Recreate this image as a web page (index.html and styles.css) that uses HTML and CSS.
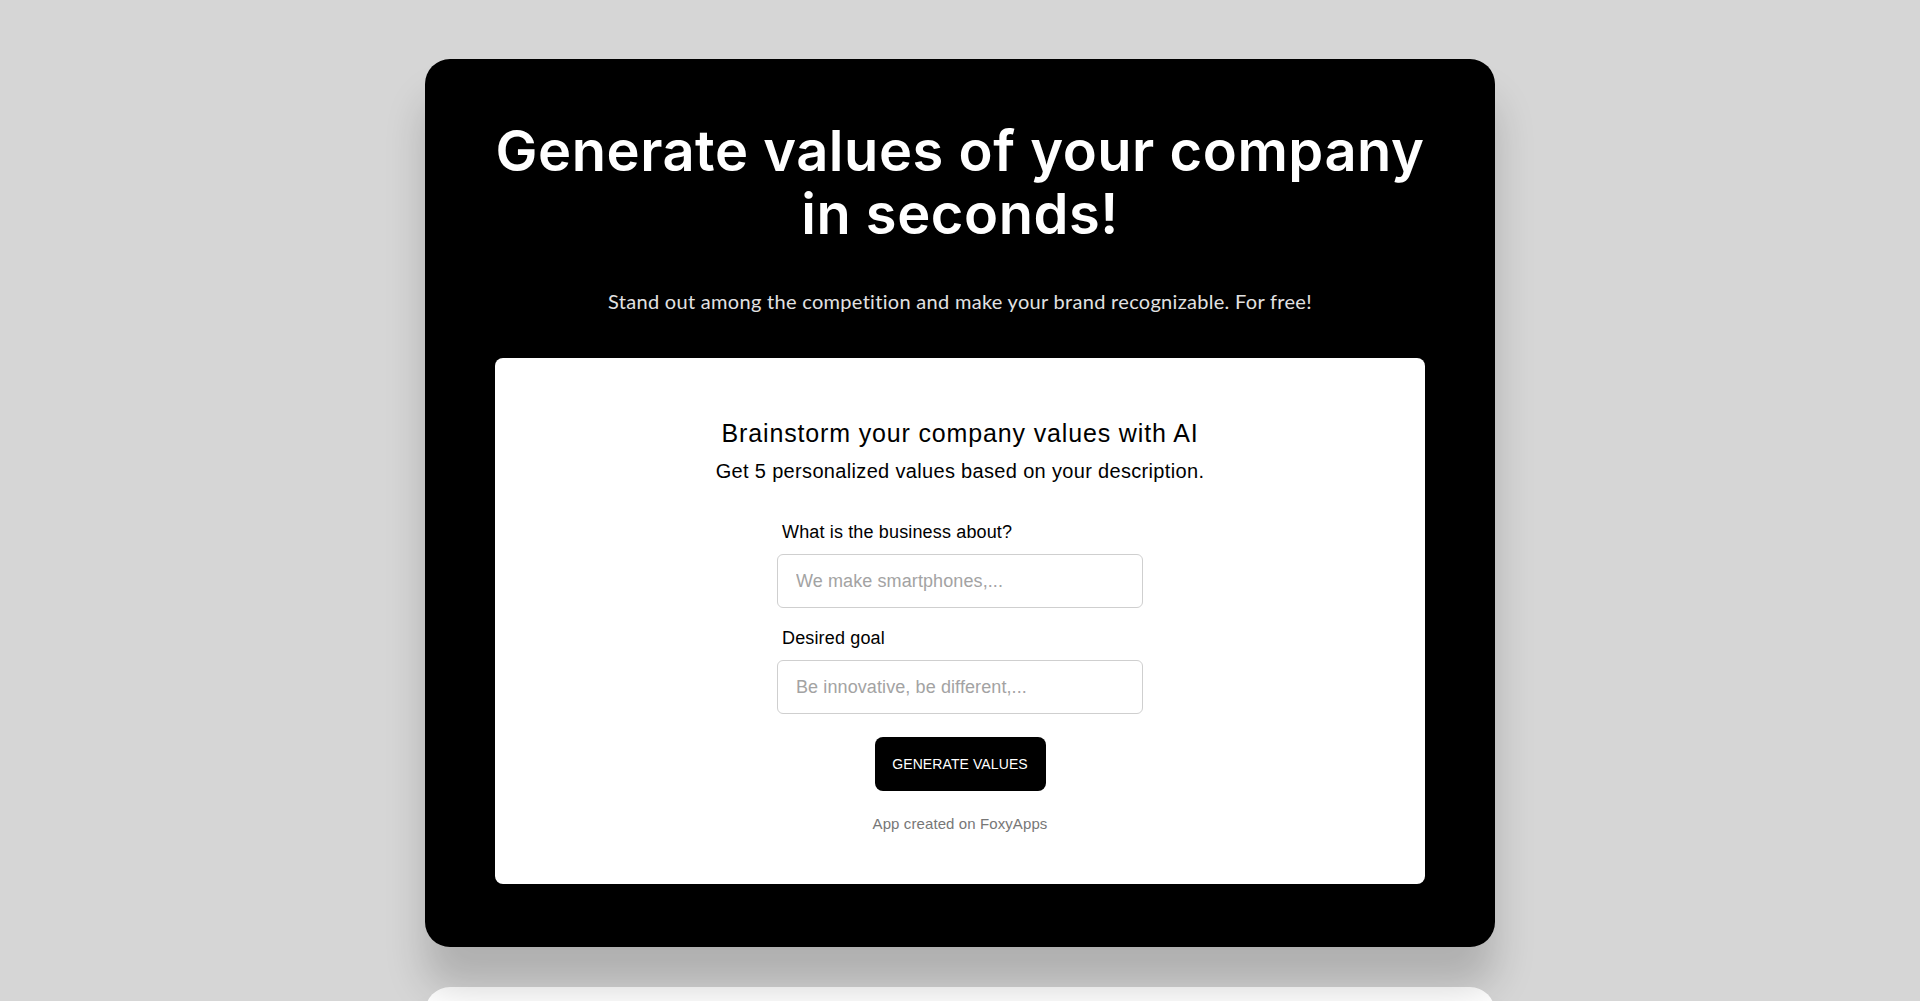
FILE: index.html
```html
<!DOCTYPE html>
<html lang="en">
<head>
<meta charset="utf-8">
<title>Company Values Generator</title>
<link rel="stylesheet" href="styles.css">
</head>
<body>
<main class="page">
  <section class="hero">
    <h1 class="hero-title">Generate values of your company<br>in seconds!</h1>
    <p class="hero-sub">Stand out among the competition and make your brand recognizable. For free!</p>
    <div class="app-card">
      <h2 class="app-title">Brainstorm your company values with AI</h2>
      <p class="app-desc">Get 5 personalized values based on your description.</p>
      <form class="form">
        <label class="field-label" for="about">What is the business about?</label>
        <input class="field-input" id="about" type="text" placeholder="We make smartphones,...">
        <label class="field-label second" for="goal">Desired goal</label>
        <input class="field-input" id="goal" type="text" placeholder="Be innovative, be different,...">
        <button class="btn" type="button">GENERATE VALUES</button>
      </form>
      <p class="credit">App created on FoxyApps</p>
    </div>
  </section>
  <section class="next-card"></section>
</main>
</body>
</html>
```

FILE: styles.css
```css
* { box-sizing: border-box; }

html, body {
  margin: 0;
  padding: 0;
  background: #d6d6d6;
  overflow: hidden;
}

.page {
  display: flex;
  flex-direction: column;
  align-items: center;
  gap: 40px;
  padding-top: 59px;
}

.hero {
  width: 1070px;
  background: #000;
  border-radius: 25px;
  padding: 61px 70px 63px;
  display: flex;
  flex-direction: column;
  align-items: center;
  box-shadow: 0 40px 40px rgba(0, 0, 0, 0.18);
  position: relative;
  z-index: 1;
}

.hero-title {
  margin: 0;
  color: #fff;
  font-family: Inter, Lato, sans-serif;
  font-weight: 600;
  font-size: 56px;
  line-height: 63px;
  letter-spacing: 0.55px;
  white-space: nowrap;
  text-align: center;
}

.hero-sub {
  margin: 41px 0 0;
  color: #e2e2e2;
  font-family: Lato, "Open Sans", sans-serif;
  font-weight: 400;
  font-size: 20px;
  line-height: 28px;
  letter-spacing: 0.3px;
  text-align: center;
}

.app-card {
  margin-top: 43px;
  width: 930px;
  background: #fff;
  border-radius: 8px;
  padding: 60px 0 50px;
  display: flex;
  flex-direction: column;
  align-items: center;
  font-family: "Liberation Sans", Arial, sans-serif;
  color: #000;
}

.app-title {
  margin: 0;
  font-weight: 400;
  font-size: 25px;
  line-height: 30px;
  letter-spacing: 0.85px;
}

.app-desc {
  margin: 9px 0 0;
  font-size: 20px;
  line-height: 28px;
  letter-spacing: 0.33px;
}

.form {
  margin-top: 35px;
  width: 366px;
  display: flex;
  flex-direction: column;
  align-items: stretch;
}

.field-label {
  padding-left: 5px;
  font-size: 18px;
  line-height: 24px;
  letter-spacing: 0.15px;
  color: #000;
}

.field-label.second {
  margin-top: 18px;
}

.field-input {
  margin-top: 10px;
  height: 54px;
  border: 1px solid #cfcfcf;
  border-radius: 6px;
  padding: 0 18px;
  font-family: "Liberation Sans", Arial, sans-serif;
  font-size: 18px;
  letter-spacing: 0.1px;
  color: #000;
  background: #fff;
  outline: none;
}

.field-input::placeholder {
  color: #a3a3a3;
}

.btn {
  align-self: center;
  margin-top: 23px;
  width: 171px;
  height: 54px;
  border: none;
  border-radius: 8px;
  background: #000;
  color: #fff;
  font-family: "Liberation Sans", Arial, sans-serif;
  font-size: 14px;
  letter-spacing: 0.1px;
  cursor: pointer;
}

.credit {
  margin: 23px 0 0;
  font-size: 15px;
  line-height: 20px;
  letter-spacing: 0.1px;
  color: #777;
}

.next-card {
  width: 1070px;
  height: 200px;
  background: #fff;
  border-radius: 25px;
  box-shadow: 0 40px 40px rgba(0, 0, 0, 0.18);
}
```
